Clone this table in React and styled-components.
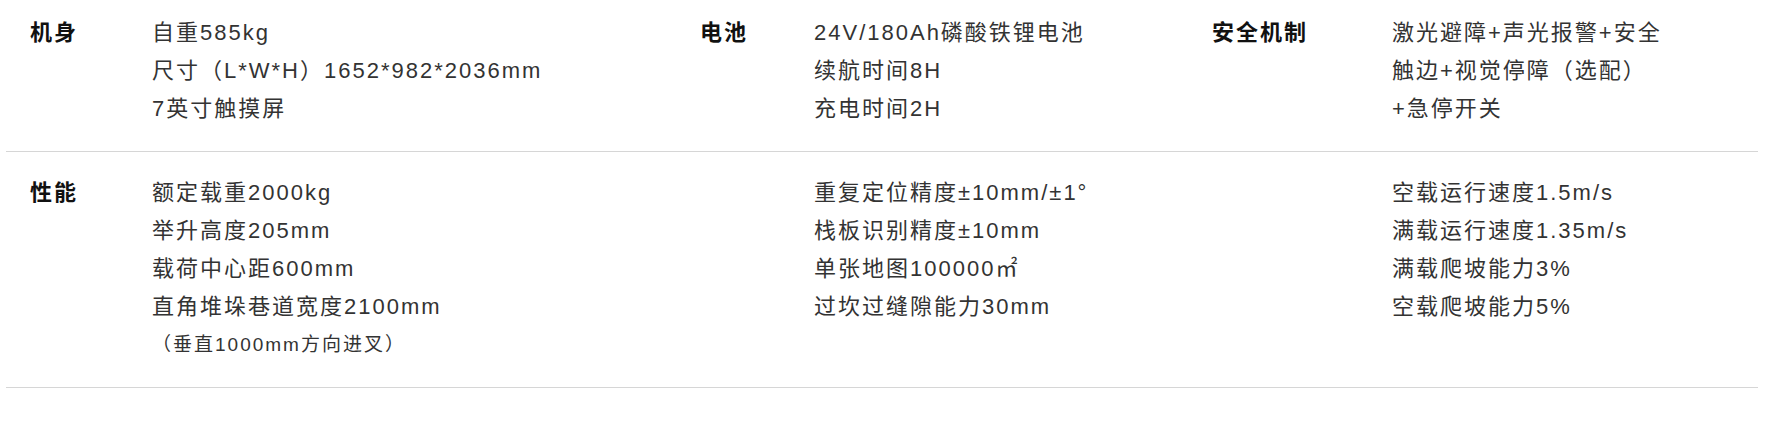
import React from 'react';
import styled, { createGlobalStyle } from 'styled-components';

const GlobalStyle = createGlobalStyle`
  html, body {
    margin: 0;
    padding: 0;
    background: #fff;
  }
  body {
    font-family: 'Liberation Sans', 'Noto Sans CJK SC', sans-serif;
  }
`;

const specs = [
  {
    groups: [
      { label: '机身', lines: ['自重585kg', '尺寸（L*W*H）1652*982*2036mm', '7英寸触摸屏'] },
      { label: '电池', lines: ['24V/180Ah磷酸铁锂电池', '续航时间8H', '充电时间2H'] },
      { label: '安全机制', lines: ['激光避障+声光报警+安全', '触边+视觉停障（选配）', '+急停开关'] },
    ],
  },
  {
    groups: [
      {
        label: '性能',
        lines: ['额定载重2000kg', '举升高度205mm', '载荷中心距600mm', '直角堆垛巷道宽度2100mm'],
        note: '（垂直1000mm方向进叉）',
      },
      { label: '', lines: ['重复定位精度±10mm/±1°', '栈板识别精度±10mm', '单张地图100000㎡', '过坎过缝隙能力30mm'] },
      { label: '', lines: ['空载运行速度1.5m/s', '满载运行速度1.35m/s', '满载爬坡能力3%', '空载爬坡能力5%'] },
    ],
  },
];

const Table = styled.div`
  margin: 0 7px 0 6px;
`;

const Row = styled.div`
  display: grid;
  grid-template-columns: 122px 548px 114px 398px 180px 1fr;
  padding: 22px 0 23px 24px;
  border-bottom: 1px solid #d6d6d6;

  &:first-child {
    padding-top: 14px;
  }
`;

const Label = styled.div`
  font-size: 22px;
  line-height: 38px;
  letter-spacing: 2px;
  font-weight: 700;
  color: #111;
`;

const Values = styled.div`
  display: flex;
  flex-direction: column;
`;

const Line = styled.div`
  font-size: 22px;
  line-height: 38px;
  letter-spacing: 2px;
  color: #333;
  white-space: nowrap;
`;

const Note = styled.div`
  font-size: 19px;
  line-height: 38px;
  letter-spacing: 2px;
  color: #333;
  white-space: nowrap;
`;

export default function App() {
  return (
    <>
      <GlobalStyle />
      <Table>
        {specs.map((row, i) => (
          <Row key={i}>
            {row.groups.map((g, j) => (
              <React.Fragment key={j}>
                <Label>{g.label}</Label>
                <Values>
                  {g.lines.map((l) => (
                    <Line key={l}>{l}</Line>
                  ))}
                  {g.note && <Note>{g.note}</Note>}
                </Values>
              </React.Fragment>
            ))}
          </Row>
        ))}
      </Table>
    </>
  );
}
